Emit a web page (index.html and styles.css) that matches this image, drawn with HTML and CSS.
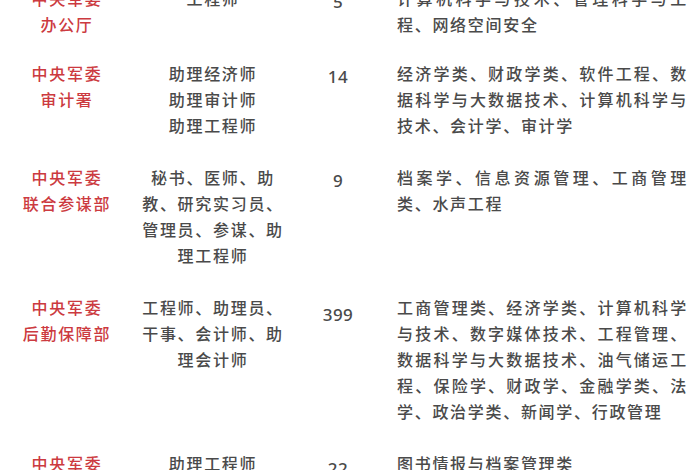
FILE: index.html
```html
<!DOCTYPE html>
<html lang="zh-CN">
<head>
<meta charset="utf-8">
<link rel="stylesheet" href="styles.css">
</head>
<body>
<div class="table">
  <div class="row first">
    <div class="dept">中央军委<br>办公厅</div>
    <div class="post">工程师</div>
    <div class="num">5</div>
    <div class="major"><span class="full-line">计算机科学与技术、管理科学与工</span>程、网络空间安全</div>
  </div>
  <div class="row">
    <div class="dept">中央军委<br>审计署</div>
    <div class="post">助理经济师<br>助理审计师<br>助理工程师</div>
    <div class="num">14</div>
    <div class="major">经济学类、财政学类、软件工程、数据科学与大数据技术、计算机科学与技术、会计学、审计学</div>
  </div>
  <div class="row">
    <div class="dept">中央军委<br>联合参谋部</div>
    <div class="post">秘书、医师、助教、研究实习员、管理员、参谋、助理工程师</div>
    <div class="num">9</div>
    <div class="major">档案学、信息资源管理、工商管理类、水声工程</div>
  </div>
  <div class="row">
    <div class="dept">中央军委<br>后勤保障部</div>
    <div class="post">工程师、助理员、干事、会计师、助理会计师</div>
    <div class="num num-low">399</div>
    <div class="major">工商管理类、经济学类、计算机科学与技术、数字媒体技术、工程管理、数据科学与大数据技术、油气储运工程、保险学、财政学、金融学类、法学、政治学类、新闻学、行政管理</div>
  </div>
  <div class="row">
    <div class="dept">中央军委<br>训练管理部</div>
    <div class="post">助理工程师</div>
    <div class="num num-last">22</div>
    <div class="major">图书情报与档案管理类</div>
  </div>
</div>
</body>
</html>
```
FILE: styles.css
```css
html, body {
  margin: 0;
  padding: 0;
  background: #ffffff;
}
body {
  width: 700px;
  height: 470px;
  overflow: hidden;
  font-family: "Noto Sans CJK SC", "Noto Sans", sans-serif;
  font-size: 16px;
  font-weight: 500;
  line-height: 26px;
  letter-spacing: 1.7px;
  color: #4a4a4a;
}
.table {
  margin-top: -28px;
}
.row {
  display: grid;
  grid-template-columns: 134px 158px 92px 304px;
  padding: 13px 0;
}
.row.first {
  padding-bottom: 10px;
}
.dept {
  text-align: center;
  color: #cc3a40;
}
.post {
  text-align: center;
  padding: 0 7px;
}
.num {
  text-align: center;
  font-family: "Noto Sans", "Open Sans", sans-serif;
  font-size: 17px;
  font-weight: 500;
  letter-spacing: 0.5px;
  padding-top: 4px;
}
.num-low {
  padding-top: 8px;
}
.num-last {
  padding-top: 6px;
}
.major {
  padding-left: 13px;
  text-align: justify;
}
.full-line {
  display: block;
  text-align-last: justify;
}
```
